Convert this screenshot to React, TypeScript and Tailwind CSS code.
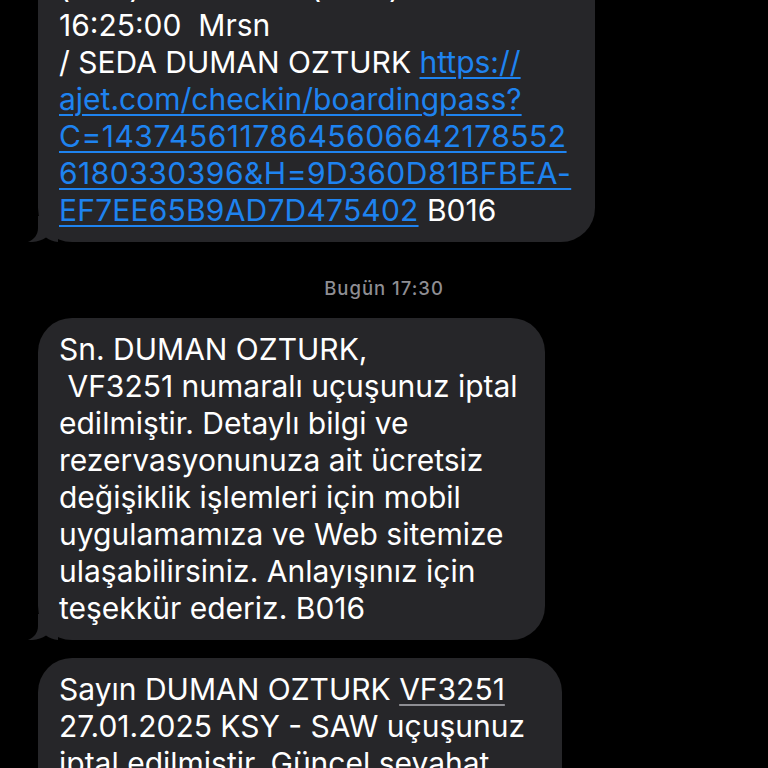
import type { ReactNode } from 'react';

const link = 'text-[#1e83f0] underline decoration-2 underline-offset-[4px]';

function Tail() {
    return (
        <svg
            className="absolute bottom-0 left-[-10px]"
            width="30"
            height="26"
            viewBox="0 0 30 26"
        >
            <path
                d="M10 0 L10 12 C10 19 6 23.5 0 26 C7 26.5 13.5 24.5 18 21.5 C21.5 24.2 25.5 25.6 30 26 L30 0 Z"
                fill="#262629"
            />
        </svg>
    );
}

function Bubble({ className, lines }: { className: string; lines: ReactNode[] }) {
    return (
        <div className={`relative rounded-[34px] bg-[#262629] pl-[21px] pr-[16px] py-[13px] ${className}`}>
            <Tail />
            <div className="relative text-[30px] leading-[37px] text-white">
                {lines.map((l, i) => (
                    <span key={i} className="block whitespace-pre">
                        {l}
                    </span>
                ))}
            </div>
        </div>
    );
}

export default function App() {
    const first = [
        'AJet Biniş Kartı VF3251',
        '(KSY) 27.01.2025 (SAW)',
        '16:25:00  Mrsn',
        <>/ SEDA DUMAN OZTURK <span className={link}>https://</span></>,
        <span className={link}>ajet.com/checkin/boardingpass?</span>,
        <span className={`${link} tracking-[0.5px]`}>C=14374561178645606642178552</span>,
        <span className={`${link} tracking-[0.5px]`}>6180330396&amp;H=9D360D81BFBEA-</span>,
        <><span className={`${link} tracking-[0.2px]`}>EF7EE65B9AD7D475402</span> B016</>,
    ];

    const second = [
        'Sn. DUMAN OZTURK,',
        ' VF3251 numaralı uçuşunuz iptal',
        'edilmiştir. Detaylı bilgi ve',
        'rezervasyonunuza ait ücretsiz',
        'değişiklik işlemleri için mobil',
        'uygulamamıza ve Web sitemize',
        'ulaşabilirsiniz. Anlayışınız için',
        'teşekkür ederiz. B016',
    ];

    const third = [
        <>Sayın DUMAN OZTURK <span className="underline decoration-[#8e8e93] decoration-2 underline-offset-[4px]">VF3251</span></>,
        '27.01.2025 KSY - SAW uçuşunuz',
        'iptal edilmiştir. Güncel seyahat',
        'bilgileriniz için mobil',
        'uygulamamızı ziyaret ediniz.',
    ];

    return (
        <div className="h-screen w-full overflow-hidden bg-black font-['Inter','Noto_Sans',sans-serif]">
            <div className="mt-[-80px] flex flex-col items-start pl-[38px]">
                <Bubble className="w-[557px]" lines={first} />

                <div className="mt-[35px] self-stretch pr-[38px] text-center text-[18.5px] font-medium leading-[22px] tracking-[1px] text-[#8e8e93]">
                    Bugün 17:30
                </div>

                <Bubble className="mt-[19px] w-[507px]" lines={second} />

                <Bubble className="mt-[18px] w-[524px]" lines={third} />
            </div>
        </div>
    );
}
